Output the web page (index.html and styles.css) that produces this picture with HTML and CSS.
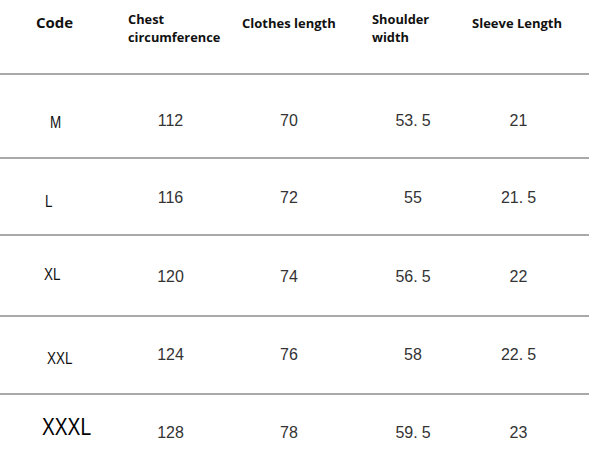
FILE: index.html
```html
<!DOCTYPE html>
<html lang="en">
<head>
<meta charset="utf-8">
<title>Size chart</title>
<link rel="stylesheet" href="styles.css">
</head>
<body>
<div class="sheet">
  <div class="head">
    <div class="h h-code">Code</div>
    <div class="h two">Chest<br>circumference</div>
    <div class="h">Clothes length</div>
    <div class="h two">Shoulder<br>width</div>
    <div class="h">Sleeve Length</div>
  </div>
  <div class="row r1">
    <div class="size s-m"><span>M</span></div>
    <div class="num">112</div>
    <div class="num">70</div>
    <div class="num">53<span class="dot">.</span>5</div>
    <div class="num">21</div>
  </div>
  <div class="row r2">
    <div class="size s-l"><span>L</span></div>
    <div class="num">116</div>
    <div class="num">72</div>
    <div class="num">55</div>
    <div class="num">21<span class="dot">.</span>5</div>
  </div>
  <div class="row r3">
    <div class="size s-xl"><span>XL</span></div>
    <div class="num">120</div>
    <div class="num">74</div>
    <div class="num">56<span class="dot">.</span>5</div>
    <div class="num">22</div>
  </div>
  <div class="row r4">
    <div class="size s-xxl"><span>XXL</span></div>
    <div class="num">124</div>
    <div class="num">76</div>
    <div class="num">58</div>
    <div class="num">22<span class="dot">.</span>5</div>
  </div>
  <div class="row r5">
    <div class="size s-xxxl"><span>XXXL</span></div>
    <div class="num">128</div>
    <div class="num">78</div>
    <div class="num">59<span class="dot">.</span>5</div>
    <div class="num">23</div>
  </div>
</div>
</body>
</html>
```

FILE: styles.css
```css
html, body {
  margin: 0;
  background: #ffffff;
}

.sheet {
  width: 589px;
}

.head {
  display: grid;
  grid-template-columns: 92px 114px 130px 100px 1fr;
  align-items: start;
  padding-left: 36px;
  height: 73px;
  border-bottom: 2px solid #a9a9a9;
  font-family: "Open Sans", "DejaVu Sans", sans-serif;
  font-weight: 700;
  font-size: 13px;
  line-height: 18px;
  color: #111111;
  white-space: nowrap;
}

.h {
  padding-top: 14px;
}

.h.two {
  padding-top: 10px;
  line-height: 18px;
  font-size: 12.8px;
}

.h-code {
  font-size: 15px;
  line-height: 20px;
  padding-top: 12px;
}

.row {
  display: grid;
  grid-template-columns: 110px 121px 116px 132px 79px 1fr;
  align-items: center;
  border-bottom: 2px solid #a9a9a9;
  font-family: "Liberation Sans", Arial, sans-serif;
  font-size: 16px;
  line-height: 18px;
  color: #333333;
}

.r1 { height: 72px; padding-top: 10px; }
.r2 { height: 73px; padding-top: 2px; }
.r3 { height: 77px; padding-top: 2px; }
.r4 { height: 76px; }
.r5 { height: 50px; padding-top: 13px; border-bottom: none; }

.num {
  text-align: center;
}

.dot {
  margin-right: 4px;
}

.size span {
  display: inline-block;
  transform: scaleX(0.84);
  transform-origin: left center;
  color: #111111;
}

.s-m { padding-left: 50px; margin-top: 3px; }
.s-l { padding-left: 45px; margin-top: 8px; }
.s-xl { padding-left: 44px; margin-bottom: 3px; }
.s-xxl { padding-left: 47px; margin-top: 8px; }
.s-xxxl {
  padding-left: 42px;
  margin-bottom: 13px;
  font-size: 24px;
  line-height: 26px;
}
.s-xxxl span {
  transform: scaleX(0.8);
  color: #000000;
}
```
